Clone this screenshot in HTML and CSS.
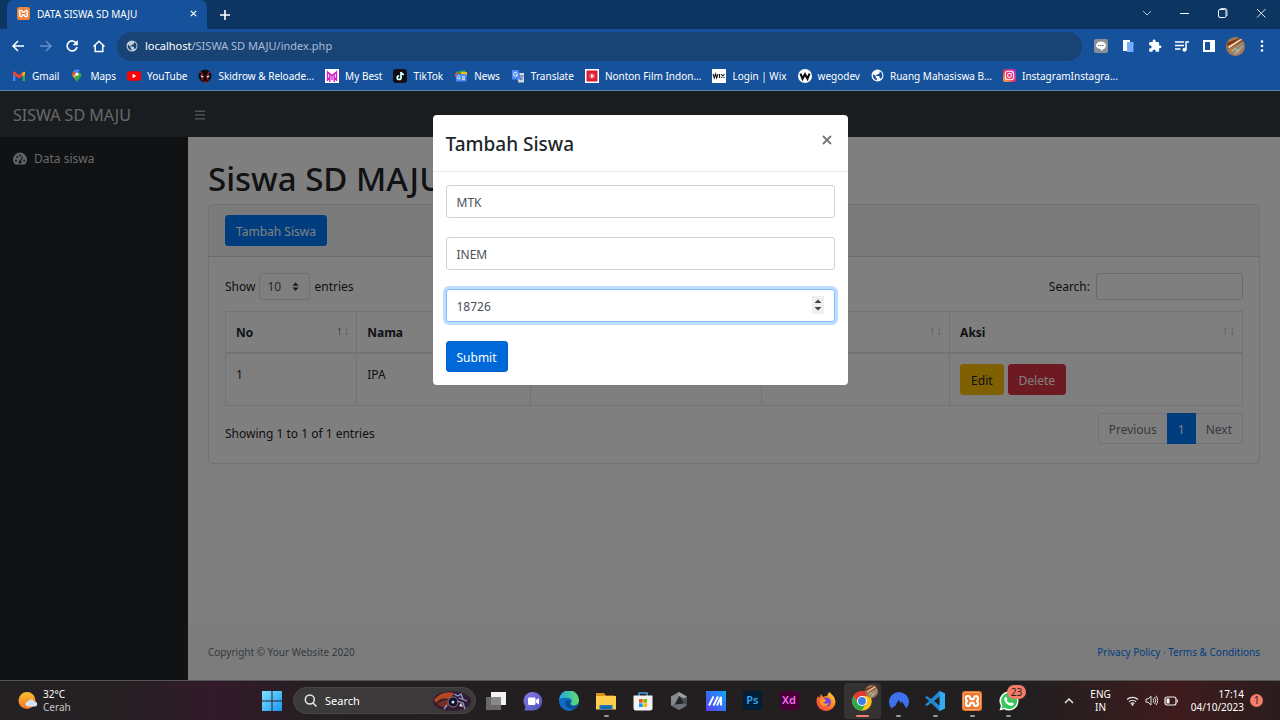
FILE: index.html
```html
<!DOCTYPE html>
<html lang="id">
<head>
<meta charset="utf-8">
<title>DATA SISWA SD MAJU</title>
<link rel="stylesheet" href="styles.css">
</head>
<body>
<svg class="defs" aria-hidden="true">
  <defs>
    <linearGradient id="gIg" x1="0" y1="1" x2="1" y2="0"><stop offset="0" stop-color="#fdc53d"/><stop offset=".4" stop-color="#f9325a"/><stop offset="1" stop-color="#a52bd6"/></linearGradient>
    <linearGradient id="gSun" x1="0" y1="0" x2="0" y2="1"><stop offset="0" stop-color="#fbc02d"/><stop offset="1" stop-color="#f0742a"/></linearGradient>
    <linearGradient id="gWin" x1="0" y1="0" x2="1" y2="1"><stop offset="0" stop-color="#7fe3ff"/><stop offset="1" stop-color="#1597f0"/></linearGradient>
    <linearGradient id="gChat" x1="0" y1="0" x2="1" y2="1"><stop offset="0" stop-color="#8a7be8"/><stop offset="1" stop-color="#4b53bc"/></linearGradient>
    <linearGradient id="gEdge" x1="0" y1="0" x2="1" y2="0"><stop offset="0" stop-color="#22a7e8"/><stop offset="1" stop-color="#5ede6b"/></linearGradient>
    <linearGradient id="gMy" x1="0" y1="1" x2="1" y2="0"><stop offset="0" stop-color="#5b3bf0"/><stop offset="1" stop-color="#11a5ff"/></linearGradient>
    <linearGradient id="gFox" x1="0" y1="1" x2="1" y2="0"><stop offset="0" stop-color="#f4304f"/><stop offset=".6" stop-color="#ff8a1e"/><stop offset="1" stop-color="#ffe14a"/></linearGradient>
    <symbol id="xampp" viewBox="0 0 20 20"><rect width="20" height="20" rx="3" fill="#e9772e"/><rect x="1.500" y="1.500" width="17" height="17" rx="3" fill="none" stroke="#f6a76b"/><path d="M8.500 8.200Q8.500 5 5.800 5T4 8q0 1.300 1.300 2Q4 10.700 4 12.200 4 15 6.200 15t2.300-3.200h3q0 3.200 2.300 3.200t2.200-2.800q0-1.500-1.300-2.200Q16 9.300 16 8q0-3-1.800-3t-2.700 3.200z" fill="none" stroke="#fff" stroke-width="2.200" stroke-linejoin="round"/></symbol>
    <symbol id="globe" viewBox="0 0 24 24"><path fill="currentColor" d="M12 1a11 11 0 1 0 0 22 11 11 0 0 0 0-22zM4 9l5 5v2l2 2v3A9 9 0 0 1 4 9zm14 9-2-1v-3l-2-1H9v-2h3V9h3l1-3V4.200A9 9 0 0 1 20.500 15z"/></symbol>
    <symbol id="avatar" viewBox="0 0 20 20"><circle cx="10" cy="10" r="10" fill="#a87852"/><path d="M1 6 14 1l4 3L2 13z" fill="#7a3b18"/><path d="m2 10 13-8 2 1-14 9z" fill="#f0d6b0"/><path d="m5 14 12-8 2 3-6 10-5-1z" fill="#8f8c7d"/><path d="m6 15 4-3 2 3 5-5M9 18l5-4" stroke="#d8c7a6" fill="none"/></symbol>
  </defs>
</svg>

<header class="browser">
  <div class="tabstrip">
    <div class="tab">
      <svg class="i13"><use href="#xampp"/></svg>
      <span class="tab-title">DATA SISWA SD MAJU</span>
      <button class="ghost" aria-label="Close tab"><svg class="i9" viewBox="0 0 10 10"><path d="m2 2 6 6M8 2 2 8" stroke="#fff" stroke-width="1.300"/></svg></button>
    </div>
    <button class="ghost new-tab" aria-label="New tab"><svg class="i12" viewBox="0 0 12 12"><path d="M6 1v10M1 6h10" stroke="#fff" stroke-width="1.600"/></svg></button>
    <div class="window-controls">
      <button class="ghost" aria-label="Search tabs"><svg class="i12" viewBox="0 0 12 12"><path d="m2 4 4 4 4-4" fill="none" stroke="#aebfd2"/></svg></button>
      <button class="ghost" aria-label="Minimize"><svg class="i12" viewBox="0 0 12 12"><path d="M1 6.500h9" stroke="#fff"/></svg></button>
      <button class="ghost" aria-label="Restore"><svg class="i12" viewBox="0 0 12 12"><rect x="1.500" y="2.500" width="7.500" height="8" rx="1.500" fill="none" stroke="#fff"/><path d="M3.500 1.500h4.500A2 2 0 0 1 10 3.500v5.500" fill="none" stroke="#cfdbe8"/></svg></button>
      <button class="ghost" aria-label="Close"><svg class="i12" viewBox="0 0 12 12"><path d="m2 2 8.500 8.500M10.500 2 2 10.500" stroke="#dfe7f0"/></svg></button>
    </div>
  </div>
  <div class="toolbar">
    <nav class="nav-buttons">
      <button class="ghost" aria-label="Back"><svg class="i14" viewBox="0 0 14 14"><path d="M13 7H2M7 2 2 7l5 5" fill="none" stroke="#fff" stroke-width="1.500"/></svg></button>
      <button class="ghost" aria-label="Forward"><svg class="i14" viewBox="0 0 14 14"><path d="M2 7h11M8 2l5 5-5 5" fill="none" stroke="#6490c5" stroke-width="1.500"/></svg></button>
      <button class="ghost" aria-label="Reload"><svg class="i14" viewBox="0 0 14 14"><path d="M11.500 4.500A5 5 0 1 0 12 8" fill="none" stroke="#fff" stroke-width="1.600"/><path d="M12.800 1v5.200H7.600z" fill="#fff"/></svg></button>
      <button class="ghost" aria-label="Home"><svg class="i14" viewBox="0 0 14 14"><path d="M1.500 7.500 7 2.200l5.500 5.300M3.200 6.500v6h7.600v-6" fill="none" stroke="#fff" stroke-width="1.500"/></svg></button>
    </nav>
    <div class="omnibox">
      <svg class="i12 globe"><use href="#globe"/></svg>
      <span class="url"><b>localhost</b>/SISWA SD MAJU/index.php</span>
    </div>
    <div class="extensions">
      <button class="ghost" aria-label="LINE"><svg class="i14" viewBox="0 0 14 14"><rect width="14" height="14" rx="2" fill="#8a8f98"/><path d="M7 2.500c3 0 5 1.700 5 4 0 2.500-3 4-5 5.500V10C4 10 2 8.500 2 6.500s2-4 5-4z" fill="#fff"/><path d="M4 6.500h6" stroke="#777" stroke-dasharray="1.500 .5"/></svg></button>
      <button class="ghost" aria-label="Documents"><svg class="i14" viewBox="0 0 14 14"><path d="M2 1h7v2H6v9H2z" fill="#fff"/><path d="M6 3h6.500v10H6z" fill="#74adff"/></svg></button>
      <button class="ghost" aria-label="Extensions"><svg class="i14" viewBox="0 0 24 24"><path fill="#fff" d="M20.500 11H19V7a2 2 0 0 0-2-2h-4V3.500a2.500 2.500 0 0 0-5 0V5H4a2 2 0 0 0-2 2v3.800h1.500a2.700 2.700 0 0 1 0 5.400H2V20a2 2 0 0 0 2 2h3.800v-1.500a2.700 2.700 0 0 1 5.400 0V22H17a2 2 0 0 0 2-2v-4h1.500a2.500 2.500 0 0 0 0-5z"/></svg></button>
      <button class="ghost" aria-label="Media"><svg class="i14" viewBox="0 0 14 14"><path d="M0 3h9M0 6.500h9M0 10h5.500M11 11V3h3" stroke="#fff" stroke-width="1.500" fill="none"/><circle cx="9.500" cy="10.800" r="2" fill="#fff"/></svg></button>
      <button class="ghost" aria-label="Side panel"><svg class="i14" viewBox="0 0 14 14"><path d="M1 1h12v12H1zM3 3v8h5V3z" fill="#fff" fill-rule="evenodd"/></svg></button>
      <button class="ghost" aria-label="Profile"><svg class="i19"><use href="#avatar"/></svg></button>
      <button class="ghost" aria-label="Menu"><svg class="i14" viewBox="0 0 14 14"><g fill="#fff"><circle cx="7" cy="2.500" r="1.300"/><circle cx="7" cy="7" r="1.300"/><circle cx="7" cy="11.500" r="1.300"/></g></svg></button>
    </div>
  </div>
  <nav class="bookmarks">
    <a href="#"><svg class="i14" viewBox="0 0 14 14"><path d="M1 3h2.500v9H1z" fill="#4285f4"/><path d="M10.500 3H13v9h-2.500z" fill="#34a853"/><path d="m1 3 1-.8L7 6l5-3.800 1 .8v2.500L7 9.500 1 5.500z" fill="#ea4335"/><path d="M10.500 3.500 13 2.800v3l-2.500 1.500z" fill="#fbbc04"/></svg>Gmail</a>
    <a href="#"><svg class="i14" viewBox="0 0 14 14"><path d="M7 13.500C6.500 10 2.500 9 2.500 5.200A4.500 4.500 0 0 1 7 .7z" fill="#fbbc04"/><path d="M7 13.500c.5-3.500 4.500-4.500 4.500-8.300L9 3 4 9c1.500 1.500 2.500 2.500 3 4.500z" fill="#34a853"/><path d="M3.500 2.300 6 5l4-3.400A4.500 4.500 0 0 0 3.500 2.300z" fill="#4285f4"/><path d="M3.500 2.300A4.500 4.500 0 0 0 2.700 7L6 4.500z" fill="#ea4335"/><circle cx="7" cy="5.200" r="1.600" fill="#fff"/></svg>Maps</a>
    <a href="#"><svg class="i14" viewBox="0 0 14 14"><rect y="2.200" width="14" height="9.600" rx="2.200" fill="#f00"/><path d="m5.600 4.800 3.800 2.200-3.800 2.200z" fill="#fff"/></svg>YouTube</a>
    <a href="#"><svg class="i14" viewBox="0 0 14 14"><circle cx="7" cy="7" r="6.500" fill="#14090b"/><path d="M2.500 2.800Q7 8 3.500 11.500M11.500 2.800Q7 8 10.500 11.500M5 13h4" stroke="#9d1d27" stroke-width="1.300" fill="none"/><path d="m2.500 6 3.200 1.800-2 1zM11.500 6 8.300 7.800l2 1z" fill="#fff"/></svg>Skidrow &amp; Reloade...</a>
    <a href="#"><svg class="i14" viewBox="0 0 14 14"><path d="M0 0h14v14H0z" fill="#fff"/><path d="M2.500 12V3L7 6.500 11.500 3v9M4.800 5v8M9.200 5v8M7 6.500V11M2.500 8.500l2.300 2M11.500 8.500l-2.300 2" fill="none" stroke="#d41bd0" stroke-width="1.400"/></svg>My Best</a>
    <a href="#"><svg class="i14" viewBox="0 0 14 14"><rect width="14" height="14" rx="3" fill="#140f16"/><path d="M7.700 3v5.500a1.900 1.900 0 1 1-1.900-1.900M7.700 3q.5 2.200 2.800 2.400" fill="none" stroke="#25f4ee" stroke-width="1.400"/><path d="M8.200 3.200v5.500a1.900 1.900 0 1 1-1.900-1.900M8.200 3.200q.5 2.200 2.800 2.400" fill="none" stroke="#fff" stroke-width="1.300"/></svg>TikTok</a>
    <a href="#"><svg class="i14" viewBox="0 0 14 14"><path d="m2 3 9-2 1 4H2z" fill="#34a853"/><path d="M1 4h5v4H1z" fill="#ea4335"/><path d="M7 3h6v4H7z" fill="#fbbc04"/><rect x="2" y="5" width="10.500" height="7.500" rx="1" fill="#4c8bf5"/><path d="M6 7.500a1.500 1.500 0 1 0 .3 1.500H5M8 7.700h3M8 9h3M8 10.300h3" fill="none" stroke="#fff" stroke-width=".8"/></svg>News</a>
    <a href="#"><svg class="i14" viewBox="0 0 14 14"><path d="M5 4h8v9.500H7.500z" fill="#d5dae2"/><path d="M1 1h6.500l3 9.500H1z" fill="#4c8bf5"/><path d="M6.300 4.300a2 2 0 1 0 .2 1.500H4.700" fill="none" stroke="#fff"/><path d="M8.500 7h4M10.500 6v1M12 7q-.5 2.500-3 4M9 8q1 2 3 3" fill="none" stroke="#5b6f8d" stroke-width=".8"/></svg>Translate</a>
    <a href="#"><svg class="i14" viewBox="0 0 14 14"><path d="M0 0h14v14H0z" fill="#fff"/><rect x="1" y="1.500" width="12" height="11" fill="#d91f34"/><path d="M1 1.500v11M13 1.500v11" stroke="#fff" stroke-dasharray="1 1" stroke-width="2"/><circle cx="7" cy="7" r="3" fill="#f4525f"/><path d="m6 5 3 2-3 2z" fill="#fff"/></svg>Nonton Film Indon...</a>
    <a href="#"><svg class="i14" viewBox="0 0 14 14"><path d="M0 0h14v14H0z" fill="#fff"/><path d="m1 5 1.300 4 1.200-4 1.200 4L6 5M7.500 5v4M9 5l3.500 4M12.500 5 9 9" fill="none" stroke="#161616" stroke-width="1.100"/></svg>Login | Wix</a>
    <a href="#"><svg class="i14" viewBox="0 0 14 14"><circle cx="7" cy="7" r="7" fill="#fff"/><path d="m2.500 4.700 2 5L7 5.200l2.500 4.500 2-5" fill="none" stroke="#111" stroke-width="2.200"/></svg>wegodev</a>
    <a href="#"><svg class="i13"><use href="#globe"/></svg>Ruang Mahasiswa B...</a>
    <a href="#"><svg class="i13" viewBox="0 0 14 14"><rect width="14" height="14" rx="3" fill="url(#gIg)"/><rect x="2.500" y="2.500" width="9" height="9" rx="2.500" fill="none" stroke="#fff" stroke-width="1.100"/><circle cx="7" cy="7" r="2.100" fill="none" stroke="#fff" stroke-width="1.100"/><circle cx="9.800" cy="4.200" r=".6" fill="#fff"/></svg>InstagramInstagra...</a>
  </nav>
</header>

<div class="page">
  <nav class="topnav">
    <a class="brand" href="#">SISWA SD MAJU</a>
    <button class="ghost" aria-label="Toggle sidebar"><svg class="i12" viewBox="0 0 12 12"><path d="M1 2.200h10M1 6h10M1 9.800h10" stroke="#999c9f" stroke-width="1.400"/></svg></button>
  </nav>
  <div class="layout">
    <aside class="sidebar">
      <a href="#"><svg class="i14" viewBox="0 0 14 14"><path fill="#c4c6c8" d="M2 12.500A7 7 0 1 1 12 12.500z"/><g fill="#212529"><circle cx="3" cy="8.500" r="1"/><circle cx="4.200" cy="5" r="1"/><circle cx="7" cy="3.500" r="1"/><circle cx="11.200" cy="8.500" r="1"/><circle cx="7" cy="10" r="1.600"/></g><path d="m7 10 2.400-5.500" stroke="#212529" stroke-width="1.100"/></svg>Data siswa</a>
    </aside>
    <div class="content">
      <main>
        <h1>Siswa SD MAJU</h1>
        <section class="card">
          <div class="card-header"><button class="btn primary">Tambah Siswa</button></div>
          <div class="card-body">
            <div class="table-tools">
              <div class="length"><label for="len">Show</label>
                <span class="select-wrap"><select id="len"><option>10</option></select><svg viewBox="0 0 8 10"><path d="m4 0 3.500 4h-7zM4 10 .5 6h7z" fill="#343a40"/></svg></span>
                <span>entries</span></div>
              <div class="search"><label for="q">Search:</label><input id="q" type="search"></div>
            </div>
            <table>
              <colgroup><col class="c1"><col class="c2"><col class="c3"><col class="c4"><col class="c5"></colgroup>
              <thead><tr>
                <th><div>No<span class="sort"><i class="on">↑</i><i>↓</i></span></div></th>
                <th><div>Nama</div></th>
                <th></th>
                <th><div><span></span><span class="sort"><i>↑</i><i>↓</i></span></div></th>
                <th><div>Aksi<span class="sort"><i>↑</i><i>↓</i></span></div></th>
              </tr></thead>
              <tbody><tr><td>1</td><td>IPA</td><td></td><td></td><td class="actions-cell"><div class="actions"><button class="btn warning">Edit</button><button class="btn danger">Delete</button></div></td></tr></tbody>
            </table>
            <div class="table-foot">
              <span>Showing 1 to 1 of 1 entries</span>
              <nav class="pager"><a href="#">Previous</a><a class="active" href="#">1</a><a href="#">Next</a></nav>
            </div>
          </div>
        </section>
      </main>
      <footer><span>Copyright © Your Website 2020</span><span><a href="#">Privacy Policy</a> · <a href="#">Terms &amp; Conditions</a></span></footer>
    </div>
  </div>
  <div class="backdrop">
    <form class="modal" role="dialog" aria-labelledby="mt">
      <div class="modal-header"><h2 id="mt">Tambah Siswa</h2><button type="button" class="ghost" aria-label="Tutup"><svg class="i12" viewBox="0 0 12 12"><path d="m2 2 8 8M10 2l-8 8" stroke="#777" stroke-width="1.900"/></svg></button></div>
      <div class="modal-body">
        <input class="field" type="text" aria-label="Nama" value="MTK">
        <input class="field" type="text" aria-label="Pengajar" value="INEM">
        <div class="number-wrap">
          <input class="field focused" type="number" aria-label="Nomor" value="18726">
          <svg class="spinner" viewBox="0 0 12 18"><path d="M0 0h12v18H0z" fill="#efefef"/><path d="M6 3.500 9.500 7h-7zM6 14.500 2.500 11h7z" fill="#444"/></svg>
        </div>
        <button type="button" class="btn submit">Submit</button>
      </div>
    </form>
  </div>
</div>

<footer class="taskbar">
  <div class="weather"><svg class="i20" viewBox="0 0 20 20"><circle cx="9" cy="9.500" r="8.500" fill="url(#gSun)"/><path d="M10 15.500a2.500 2.500 0 0 1 0-5 3.400 3.400 0 0 1 6.300 0 2.500 2.500 0 0 1 .7 5z" fill="#d5e1f7"/></svg><div>32°C<br><span>Cerah</span></div></div>
  <div class="dock">
    <button class="ghost start" aria-label="Start"><svg class="i20" viewBox="0 0 20 20"><path d="M0 0h9.500v9.500H0zM10.500 0H20v9.500h-9.500zM0 10.500h9.500V20H0zM10.500 10.500H20V20h-9.500z" fill="url(#gWin)"/></svg></button>
    <div class="search-pill"><svg class="i13" viewBox="0 0 13 13"><circle cx="5.800" cy="5.500" r="4.500" fill="none" stroke="#e8e8e8" stroke-width="1.500"/><path d="m9 9 3.500 3.500" stroke="#e8e8e8" stroke-width="1.500"/></svg><span>Search</span>
      <svg class="art" viewBox="0 0 40 22"><ellipse cx="20" cy="11" rx="19" ry="10" fill="#351a33"/><path d="M2 10Q10 0 22 3L18 9Q8 7 4 13z" fill="#b34722"/><path d="M5 14q8-6 14-3l-2 5q-6 3-12-2z" fill="#79301f"/><circle cx="21" cy="12" r="5" fill="#110e26" stroke="#7d7798"/><circle cx="21" cy="12" r="1.500" fill="#d8dff5"/><path d="m22 4 4 2 3-2 2 5M25 11l6 2 2 6M27 8l8 3M15 15l-3 4" fill="none" stroke="#8fa1cf" stroke-width="1.300"/><path d="m27 16 2-3 2 4z" fill="#e8dcd7"/></svg></div>
    <div class="apps">
      <button class="ghost" aria-label="Task view"><svg class="i20" viewBox="0 0 20 20"><path d="M5 1h15v13H5z" fill="#f2f2f2"/><path d="M0 6h15v13H0z" fill="#777" fill-opacity=".85"/></svg></button>
      <button class="ghost" aria-label="Chat"><svg class="i20" viewBox="0 0 20 20"><path d="M10 1a9 9 0 0 1 0 18.500H1.500l1-4A9 9 0 0 1 10 1z" fill="url(#gChat)"/><rect x="5" y="6.500" width="7.500" height="7.500" rx="1.300" fill="#fff"/><path d="m13 9 3-2v6.500l-3-2z" fill="#fff"/></svg></button>
      <button class="ghost" aria-label="Edge"><svg class="i20" viewBox="0 0 20 20"><circle cx="10" cy="10" r="10" fill="#0f6cc4"/><path d="M0 9.500A10 10 0 0 1 20 9c0 4-3 5.500-6 5.500-2 0-3-1-2-2.500 1.500-2 .5-5-2.500-5C5 6.500 1 6.500 0 9.500z" fill="url(#gEdge)"/><path d="M8 9c-4 3 0 9 5 9 3 0 5-2 6-4-4 2-8 1-8-2 0-1 .5-2 .5-2z" fill="#0b4d91"/></svg></button>
      <button class="ghost running" aria-label="Explorer"><svg class="i20" viewBox="0 0 20 20"><path d="M0 2h8l2 2.500h8V9H0z" fill="#d99213"/><path d="M0 5h20v13.500H0z" fill="#fbcf4b"/><path d="M3.500 18.500V14h13v4.500z" fill="#1c74be"/><path d="M6 16.500h8" stroke="#0c5593"/></svg></button>
      <button class="ghost" aria-label="Store"><svg class="i20" viewBox="0 0 20 20"><path d="M6 5V2h8v3" fill="none" stroke="#3fa8dd" stroke-width="1.500"/><path d="M.5 4.500h19V17a2.500 2.500 0 0 1-2.500 2.500H3A2.500 2.500 0 0 1 .5 17z" fill="#f3f3f3"/><path d="M6 8h3.700v3.700H6z" fill="#f25022"/><path d="M10.300 8H14v3.700h-3.700z" fill="#7fba00"/><path d="M6 12.300h3.700V16H6z" fill="#00a4ef"/><path d="M10.300 12.300H14V16h-3.700z" fill="#ffb900"/></svg></button>
      <button class="ghost" aria-label="System tool"><svg class="i20" viewBox="0 0 20 20"><path d="m10 1 8 4.500v9L10 19l-8-4.500v-9z" fill="#4a4f53"/><path d="M10 1 2 5.500v9l4-1L10 5z" fill="#85898d"/><path d="m10 1 8 4.500-3 2L10 5z" fill="#9da1a4"/><path d="m10.500 5 4.500 7.500-9.500 1.200z" fill="#202427"/><path d="m5.500 13.700 9.500-1.200L18 14.500 10 19l-8-4.500z" fill="#6b7074"/></svg></button>
      <button class="ghost" aria-label="MyASUS"><svg class="i20" viewBox="0 0 20 20"><path d="M0 0h20v20H0z" fill="url(#gMy)"/><path d="m3 14.500 4.500-9M7.500 14.500l4.500-9M11 14.500l4-8.500v8.500" fill="none" stroke="#fff" stroke-width="1.900"/></svg></button>
      <button class="ghost" aria-label="Photoshop"><span class="adobe ps">Ps</span></button>
      <button class="ghost" aria-label="Adobe XD"><span class="adobe xd">Xd</span></button>
      <button class="ghost" aria-label="Firefox"><svg class="i20" viewBox="0 0 20 20"><path d="M2 5l1.500 2L5 3l2 3q2-1 4-1l2-4q6 4 6.500 10A9.500 9 0 0 1 .5 11Q.5 7 2 5z" fill="url(#gFox)"/><circle cx="10.500" cy="11" r="4.500" fill="#7542e5"/><path d="M4 8.500q3-1.500 6 .5 0 2-3 2 2 3 6 1-2 4-6 3-4-2-3-6.500z" fill="#ff9a26"/></svg></button>
      <button class="ghost running active" aria-label="Chrome"><svg class="i20" viewBox="0 0 20 20"><circle cx="10" cy="10" r="9.800" fill="#fbc116"/><path d="M1.500 5A9.800 9.800 0 0 1 18.500 5H10L6 12z" fill="#e33b2e"/><path d="M1.500 5A9.800 9.800 0 0 0 9.500 19.800L14 12.500 6 12.500z" fill="#2da94f"/><circle cx="10" cy="10" r="5" fill="#fff"/><circle cx="10" cy="10" r="3.900" fill="#3c7de6"/></svg><svg class="mini"><use href="#avatar"/></svg></button>
      <button class="ghost running" aria-label="NordVPN"><svg class="i20" viewBox="0 0 20 20"><path d="M2.500 17.500A10 10 0 1 1 17.500 17.500L13 10.500l-1 1.700 1 1.700-3.200-5L6.500 14l1-.2z" fill="#3e70ee"/></svg></button>
      <button class="ghost running" aria-label="VS Code"><svg class="i20" viewBox="0 0 20 20"><path d="M14.500 0 20 2.500v15L14.500 20 6 12 2 15 0 13.800 4.200 10 0 6.200 2 5l4 3z" fill="#1f8ad2"/><path d="M14.500 0 20 2.500v15L14.500 20z" fill="#39a9ef"/><path d="M14.500 5.500v9L9 10z" fill="#231f20"/></svg></button>
      <button class="ghost running" aria-label="XAMPP"><svg class="i20"><use href="#xampp"/></svg></button>
      <button class="ghost running" aria-label="WhatsApp"><svg class="i20" viewBox="0 0 20 20"><path d="M10 .5a9.500 9.500 0 1 1-4.800 17.700L.5 19.500l1.400-4.600A9.500 9.500 0 0 1 10 .5z" fill="#fff"/><path d="M10 2a8 8 0 1 1-4.300 14.700L2.500 17.500l1-3A8 8 0 0 1 10 2z" fill="#37c65a"/><path d="M7 5.500 8.500 8l-.8 1.200q1 2 3.300 3l1.200-1 2.500 1.300c0 2-2 2.700-3.500 2.200C8 13.700 6 11.500 5.300 9 5 7.500 5.500 6 7 5.500z" fill="#fff"/></svg><span class="count">23</span></button>
    </div>
  </div>
  <div class="tray">
    <svg class="i12" viewBox="0 0 12 12"><path d="m2 8 4-4 4 4" fill="none" stroke="#eee" stroke-width="1.400"/></svg>
    <div class="lang">ENG<br>IN</div>
    <div class="status">
      <svg class="i13" viewBox="0 0 13 13"><g fill="none" stroke="#e8e8e8" stroke-width="1.200"><path d="M1 5.500a8 8 0 0 1 11 0M3 7.700a5 5 0 0 1 7 0M4.700 9.700a2.500 2.500 0 0 1 3.600 0"/></g><circle cx="6.500" cy="10.700" r="1" fill="#fff"/></svg>
      <svg class="i13" viewBox="0 0 13 13"><path d="M1 5v3.200h2L6 11V2.200L3 5zM8 4.500q1.500 2 0 4M9.500 3q2.700 3.500 0 7M11 1.800q3.500 4.700 0 9.400" fill="none" stroke="#ddd"/></svg>
      <svg class="i14" viewBox="0 0 14 14"><rect x="1" y="3" width="11" height="8" rx="2" fill="none" stroke="#eee" stroke-width="1.200"/><path d="M2.500 4.500h3v5h-3z" fill="#fff"/><path d="M13.300 5.500v3" stroke="#eee"/></svg>
    </div>
    <div class="clock">17:14<br>04/10/2023</div>
    <span class="notice">1</span>
  </div>
</footer>
</body>
</html>
```
FILE: styles.css
```css
* { box-sizing: border-box; }
body {
  margin: 0;
  height: 100vh;
  display: flex;
  flex-direction: column;
  overflow: hidden;
  font-family: "Noto Sans", "Open Sans", sans-serif;
  font-size: 12px;
  line-height: 20px;
  color: #212529;
}
a { color: inherit; text-decoration: none; }
svg { display: block; flex: none; }
button, input, select { font: inherit; }
.defs { position: absolute; width: 0; height: 0; }
.ghost { display: flex; align-items: center; justify-content: center; padding: 0; border: 0; background: none; }
.i9 { width: 9px; height: 9px; }
.i12 { width: 12px; height: 12px; }
.i13 { width: 13px; height: 13px; }
.i14 { width: 14px; height: 14px; }
.i19 { width: 19px; height: 19px; }
.i20 { width: 20px; height: 20px; }

/* Browser window */
.browser { flex: none; background: #15529b; color: #fff; font-size: 10px; border-bottom: 1px solid #5b82b0; }
.tabstrip { display: flex; height: 29px; background: #0c3561; }
.tab { display: flex; align-items: center; gap: 7px; width: 200px; margin-left: 7px; padding: 0 9px 2px 10px; background: #15529b; border-radius: 7px 7px 0 0; }
.tab-title { flex: 1; }
.new-tab { width: 36px; }
.window-controls { display: flex; margin-left: auto; padding-bottom: 3px; }
.window-controls .ghost { width: 38px; }
.toolbar { display: flex; align-items: center; height: 32px; padding-top: 2px; }
.nav-buttons { display: flex; gap: 13px; padding: 0 11px; }
.omnibox { flex: 1; display: flex; align-items: center; gap: 7px; height: 29px; padding: 0 9px; border-radius: 15px; background: #194375; font-size: 11px; }
.globe { color: #c3ccd6; }
.url { color: #a9bdd4; }
.url b { font-weight: 400; color: #fff; }
.extensions { display: flex; align-items: center; gap: 13px; padding: 0 11px 0 12px; }
.extensions .i19 { margin: 0 -3px; }
.bookmarks { display: flex; gap: 11px; height: 29px; padding: 0 12px; }
.bookmarks a { display: flex; align-items: center; gap: 6px; white-space: nowrap; }

/* Web page */
.page { position: relative; flex: 1; min-height: 0; display: flex; flex-direction: column; background: #fff; }
.topnav { display: flex; align-items: center; height: 46px; padding-top: 1px; background: #343a40; }
.brand { width: 194px; padding-left: 13px; font-size: 16px; color: #d0d1d2; }
.layout { flex: 1; display: flex; }
.sidebar { width: 188px; padding: 12px 13px; background: #212529; color: #d0d1d2; }
.sidebar a { display: flex; align-items: center; gap: 7px; }
.content { flex: 1; display: flex; flex-direction: column; justify-content: space-between; }
main { padding: 22px 20px 0; }
h1 { margin: 0 0 5px; font-size: 33px; line-height: 40px; font-weight: 500; }
.card { border: 1px solid #e4e4e4; border-radius: 4px; }
.card-header { padding: 10px 16px; background: #f7f7f7; border-bottom: 1px solid #d8d8d8; }
.card-body { padding: 16px 16px 19px; }
.btn { height: 31px; padding: 2px 10px 0; border: 1px solid; border-radius: 3px; }
.primary { background: #007bff; border-color: #007bff; color: #fff; }
.warning { background: #ffc107; border-color: #ffc107; color: #212529; }
.danger { background: #dc3545; border-color: #dc3545; color: #fff; }
.submit { background: #0069d9; border-color: #0062cc; color: #fff; align-self: flex-start; }
.table-tools { display: flex; justify-content: space-between; align-items: center; margin-bottom: 11px; }
.length, .search { display: flex; align-items: center; gap: 4px; }
.search { gap: 6px; }
.select-wrap { position: relative; }
.select-wrap select { display: block; width: 51px; height: 27px; padding: 0 7px; appearance: none; border: 1px solid #dadee2; border-radius: 3px; background: none; color: #495057; }
.select-wrap svg { position: absolute; right: 11px; top: 9px; width: 7px; height: 9px; pointer-events: none; }
.search input { width: 147px; height: 27px; border: 1px solid #d3d7db; border-radius: 3px; background: none; }
table { width: 100%; table-layout: fixed; border-collapse: collapse; border: 1px solid #e2e6ea; }
.c1 { width: 12.9%; }
.c2 { width: 17.1%; }
.c3 { width: 22.7%; }
.c4 { width: 18.5%; }
.c5 { width: 28.8%; }
th, td { padding: 11px 10px 9px; border: 1px solid #e2e6ea; text-align: left; vertical-align: top; }
th { border-bottom-width: 2px; padding-right: 6px; }
th div { display: flex; justify-content: space-between; }
.sort { display: flex; font-weight: 400; }
.sort i { width: 7px; font-style: normal; font-size: 12px; line-height: 16px; color: #b0b3b6; }
.sort .on { color: #55595d; }
.actions-cell { padding: 10px; }
.actions { display: flex; gap: 4px; }
.table-foot { display: flex; justify-content: space-between; align-items: center; margin-top: 7px; }
.table-foot > span { padding-top: 10px; }
.pager { display: flex; border: 1px solid #e2e6ea; border-radius: 3px; color: #6c757d; line-height: 29px; }
.pager a { height: 29px; padding: 1px 10px 0; }
.pager .active { height: 31px; margin: -1px 0; padding: 2px 11px 0; background: #007bff; color: #fff; }
.content footer { display: flex; justify-content: space-between; align-items: center; height: 56px; padding: 0 20px; background: #f8f9fa; font-size: 10px; color: #6c757d; }
.content footer a { color: #007bff; }

/* Dialog */
.backdrop { position: absolute; inset: 0; padding-top: 24px; background: rgba(0, 0, 0, 0.5); }
.modal { width: 415px; margin: 0 auto; border-radius: 4px; background: #fff; }
.modal-header { display: flex; justify-content: space-between; align-items: flex-start; padding: 14px 13px 12px; border-bottom: 1px solid #e9ecef; }
.modal-header h2 { margin: 0; font-size: 19px; line-height: 30px; font-weight: 500; }
.modal-header .ghost { width: 16px; height: 22px; }
.modal-body { display: flex; flex-direction: column; gap: 19px; padding: 13px; }
.field { display: block; width: 100%; height: 33px; padding: 2px 10px 0; border: 1px solid #ced4da; border-radius: 3px; background: #fff; color: #495057; }
.field.focused { border-color: #80bdff; box-shadow: 0 0 0 3px #bfdeff; appearance: textfield; }
.number-wrap { position: relative; }
.spinner { position: absolute; right: 11px; top: 7px; width: 12px; height: 18px; }

/* Taskbar */
.taskbar { flex: none; display: grid; grid-template-columns: 1fr auto 1fr; align-items: center; height: 40px; border-top: 1px solid #555; color: #fff; font-size: 10px; line-height: 13px;
  background: linear-gradient(90deg, #232123, #261f23 10%, #331a2a 17%, #241f21 25%, #211f20 80%, #351d1e 88%, #401b1d 92%, #2a1d1e); }
.weather { display: flex; align-items: center; gap: 5px; padding-left: 18px; }
.weather span { color: #c4c4c4; }
.dock { display: flex; align-items: center; gap: 2px; }
.start { width: 38px; }
.search-pill { display: flex; align-items: center; gap: 8px; width: 183px; height: 27px; padding: 0 3px 0 10px; border: 1px solid #484647; border-radius: 14px; background: #3b393a; font-size: 11px; }
.art { width: 40px; height: 22px; margin-left: auto; }
.apps { display: flex; width: 549px; }
.apps .ghost { position: relative; flex: 1; height: 36px; border-radius: 4px; }
.apps .active { background: #343233; }
.running::after { content: ""; position: absolute; bottom: 2px; width: 5px; height: 2px; border-radius: 1px; background: #999; }
.running.active::after { width: 13px; background: #f0836f; }
.mini { position: absolute; right: 3px; top: 2px; width: 13px; height: 13px; }
.count { position: absolute; right: 1px; top: 2px; width: 19px; height: 14px; border-radius: 7px; background: #f47c68; color: #222; font-size: 10px; line-height: 14px; }
.adobe { width: 19px; height: 19px; border-radius: 3px; font-size: 11px; line-height: 18px; font-weight: 600; }
.ps { background: #001e36; color: #38a8fa; }
.xd { background: #470137; color: #f36ff0; }
.tray { display: flex; align-items: center; justify-content: flex-end; padding-right: 17px; text-align: center; }
.lang { margin: 0 15px 0 15px; }
.status { display: flex; align-items: center; gap: 6px; margin-right: 13px; }
.clock { text-align: right; margin-right: 6px; }
.notice { width: 13px; height: 13px; border-radius: 50%; background: #f47c68; color: #222; }
```
